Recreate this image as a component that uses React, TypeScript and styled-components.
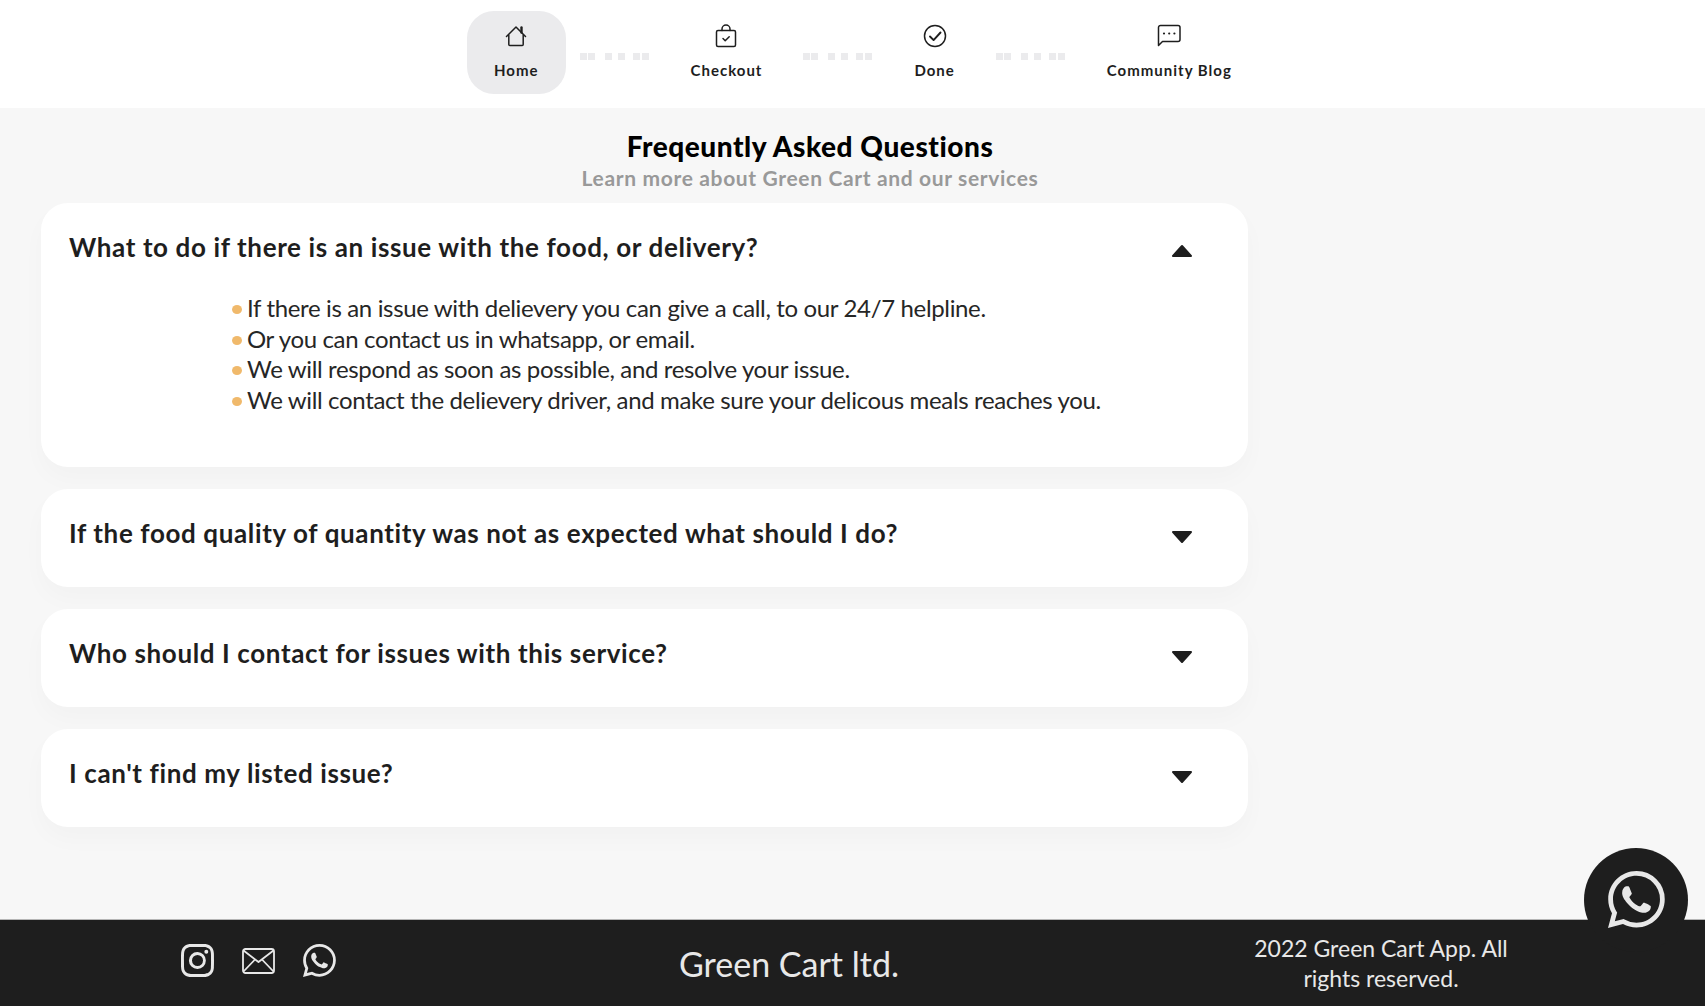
import React from 'react';
import styled, { createGlobalStyle } from 'styled-components';
import { BsInstagram, BsWhatsapp } from 'react-icons/bs';

const GlobalStyle = createGlobalStyle`
  html, body {
    margin: 0;
    padding: 0;
    height: 100%;
    background: #ffffff;
    font-family: 'Lato', 'Noto Sans', sans-serif;
    overflow: hidden;
  }
`;

const Page = styled.div`
  position: relative;
  display: flex;
  flex-direction: column;
  width: 1705px;
  height: 1006px;
  background: #f7f7f7;
`;

const TopNav = styled.nav`
  display: flex;
  align-items: flex-start;
  gap: 14px;
  height: 108px;
  padding: 11px 0 0 467px;
  box-sizing: border-box;
  background: #ffffff;
`;

const NavItem = styled.a<{ $active?: boolean }>`
  display: flex;
  flex-direction: column;
  align-items: center;
  height: 83px;
  padding: 12px 27px 0;
  box-sizing: border-box;
  border-radius: 27px;
  background: ${props => (props.$active ? '#ebebed' : 'transparent')};
  color: #1e1e1e;
`;

const NavIcon = styled.svg`
  width: 26px;
  height: 26px;
  fill: none;
  stroke: #1e1e1e;
  stroke-width: 1.5;
  stroke-linecap: round;
  stroke-linejoin: round;
`;

const NavLabel = styled.span`
  margin-top: 12px;
  font-size: 15px;
  line-height: 18px;
  font-weight: 700;
  letter-spacing: 1px;
  white-space: nowrap;
`;

const Dots = styled.svg`
  width: 70px;
  height: 7px;
  margin-top: 42px;
  fill: #ebebed;
`;

const Main = styled.main`
  flex: 1;
  padding: 21px 0 0 41px;
`;

const Heading = styled.header`
  width: 1538px;
  text-align: center;
`;

const Title = styled.h1`
  margin: 0;
  font-size: 28px;
  line-height: 34px;
  font-weight: 900;
  letter-spacing: 0.55px;
  color: #000000;
`;

const Subtitle = styled.p`
  margin: 0;
  font-size: 21px;
  line-height: 30px;
  font-weight: 700;
  letter-spacing: 0.65px;
  color: #999999;
`;

const FaqList = styled.section`
  display: flex;
  flex-direction: column;
  gap: 22px;
  width: 1207px;
  margin-top: 10px;
`;

const FaqCard = styled.article<{ $open?: boolean }>`
  height: ${props => (props.$open ? '264px' : '98px')};
  padding: 27px 28px 0;
  box-sizing: border-box;
  border-radius: 27px;
  background: #ffffff;
  box-shadow: 0 12px 24px rgba(0, 0, 0, 0.025);
`;

const QuestionRow = styled.div`
  display: flex;
  justify-content: space-between;
  align-items: flex-start;
`;

const Question = styled.h2`
  margin: 0;
  font-size: 26px;
  line-height: 34px;
  font-weight: 700;
  letter-spacing: 0.62px;
  color: #1e1e1e;
`;

const Caret = styled.svg`
  width: 22px;
  height: 14px;
  margin: 14px 27px 0 0;
  fill: #1e1e1e;
  stroke: #1e1e1e;
  stroke-width: 2;
  stroke-linejoin: round;
`;

const Answer = styled.ul`
  margin: 29px 0 0;
  padding: 0 0 0 178px;
  list-style: none;
`;

const AnswerItem = styled.li`
  position: relative;
  font-size: 24px;
  line-height: 30.6px;
  letter-spacing: -0.35px;
  color: #262626;

  &::before {
    content: '';
    position: absolute;
    left: -15px;
    top: 12px;
    width: 10px;
    height: 9px;
    border-radius: 50%;
    background: #f0b96b;
  }
`;

const Footer = styled.footer`
  display: flex;
  align-items: center;
  height: 87px;
  box-sizing: border-box;
  border-top: 1px solid #b5b5b5;
  background: #1e1e1e;
  color: #e8e8e8;
`;

const Socials = styled.div`
  display: flex;
  align-items: center;
  gap: 28px;
  width: 658px;
  padding: 0 0 5px 181px;
  box-sizing: border-box;
  font-size: 33px;
`;

const MailIcon = styled.svg`
  width: 33px;
  height: 26px;
  fill: none;
  stroke: #e8e8e8;
  stroke-width: 1.8;
  stroke-linejoin: round;
`;

const Brand = styled.div`
  width: 262px;
  font-size: 34px;
  text-align: center;
  white-space: nowrap;
`;

const Rights = styled.p`
  width: 260px;
  margin: 0 0 0 331px;
  font-size: 23px;
  line-height: 30.5px;
  text-align: center;
`;

const ChatFab = styled.a`
  position: absolute;
  left: 1584px;
  top: 848px;
  display: flex;
  justify-content: center;
  width: 104px;
  height: 104px;
  padding-top: 23px;
  box-sizing: border-box;
  border-radius: 50%;
  background: #1e1e1e;
  color: #e8e8e8;
  font-size: 57px;
`;

const answers = [
  'If there is an issue with delievery you can give a call, to our 24/7 helpline.',
  'Or you can contact us in whatsapp, or email.',
  'We will respond as soon as possible, and resolve your issue.',
  'We will contact the delievery driver, and make sure your delicous meals reaches you.',
];

const questions = [
  'If the food quality of quantity was not as expected what should I do?',
  'Who should I contact for issues with this service?',
  "I can't find my listed issue?",
];

const DotTrail = () => (
  <Dots viewBox="0 0 70 7">
    {[0, 8, 25, 38, 53, 62].map(x => (
      <rect key={x} x={x} y={0} width={7} height={7} />
    ))}
  </Dots>
);

const App: React.FC = () => (
  <Page>
    <GlobalStyle />
    <TopNav>
      <NavItem $active>
        <NavIcon viewBox="0 0 26 26">
          <path d="M3.5 13.5 13 4l9.5 9.5" />
          <path d="M5.8 12v9.5a1 1 0 0 0 1 1h12.4a1 1 0 0 0 1-1V12" />
          <path d="M18.5 4.5v5" strokeWidth="2.4" />
        </NavIcon>
        <NavLabel>Home</NavLabel>
      </NavItem>
      <DotTrail />
      <NavItem>
        <NavIcon viewBox="0 0 26 26">
          <rect x="3.5" y="7.5" width="19" height="16" rx="1.5" />
          <path d="M9 7.5V6a4 4 0 0 1 8 0v1.5" />
          <path d="m10 15.5 2.2 2.2 4-4" />
        </NavIcon>
        <NavLabel>Checkout</NavLabel>
      </NavItem>
      <DotTrail />
      <NavItem>
        <NavIcon viewBox="0 0 26 26">
          <circle cx="13" cy="13" r="10.5" />
          <path d="m8 13.5 3.6 3.6L18.5 9.5" strokeWidth="1.9" />
        </NavIcon>
        <NavLabel>Done</NavLabel>
      </NavItem>
      <DotTrail />
      <NavItem>
        <NavIcon viewBox="0 0 26 26">
          <path d="M2.5 22.5V4.5a2 2 0 0 1 2-2h17.5a2 2 0 0 1 2 2v12a2 2 0 0 1-2 2H6.5z" />
          <path d="M8 10.5h.01M13.2 10.5h.01M18.4 10.5h.01" strokeWidth="2.2" />
        </NavIcon>
        <NavLabel>Community Blog</NavLabel>
      </NavItem>
    </TopNav>

    <Main>
      <Heading>
        <Title>Freqeuntly Asked Questions</Title>
        <Subtitle>Learn more about Green Cart and our services</Subtitle>
      </Heading>
      <FaqList>
        <FaqCard $open>
          <QuestionRow>
            <Question>What to do if there is an issue with the food, or delivery?</Question>
            <Caret viewBox="0 0 22 14">
              <path d="M11 2 2 12h18z" />
            </Caret>
          </QuestionRow>
          <Answer>
            {answers.map(answer => (
              <AnswerItem key={answer}>{answer}</AnswerItem>
            ))}
          </Answer>
        </FaqCard>
        {questions.map(question => (
          <FaqCard key={question}>
            <QuestionRow>
              <Question>{question}</Question>
              <Caret viewBox="0 0 22 14">
                <path d="M11 12 2 2h18z" />
              </Caret>
            </QuestionRow>
          </FaqCard>
        ))}
      </FaqList>
    </Main>

    <Footer>
      <Socials>
        <BsInstagram />
        <MailIcon viewBox="0 0 33 26">
          <rect x="1" y="1" width="31" height="24" rx="2.5" />
          <path d="M1.5 2.5 16.5 14l15-11.5M1.5 23.5 13 11.5M31.5 23.5 20 11.5" />
        </MailIcon>
        <BsWhatsapp />
      </Socials>
      <Brand>Green Cart ltd.</Brand>
      <Rights>2022 Green Cart App. All rights reserved.</Rights>
    </Footer>

    <ChatFab>
      <BsWhatsapp />
    </ChatFab>
  </Page>
);

export default App;
